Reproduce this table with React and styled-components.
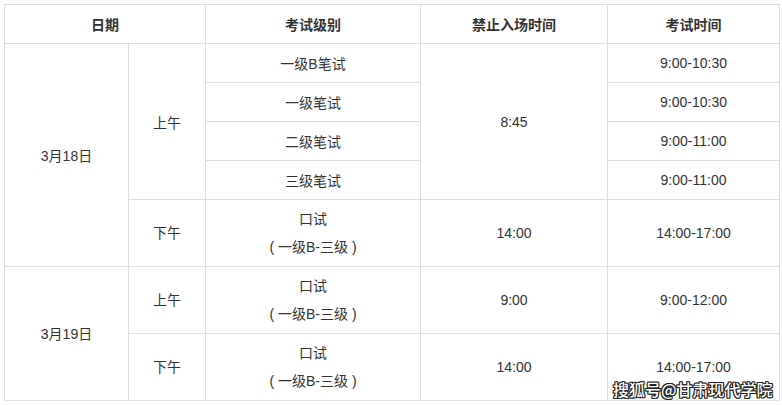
import React from "react";
import styled, { createGlobalStyle } from "styled-components";

const Global = createGlobalStyle`
  html, body { margin: 0; padding: 0; background: #fff; }
  body { font-family: "Liberation Sans", "Noto Sans CJK SC", sans-serif; }
`;

const Page = styled.div`
  position: relative;
  width: 782px;
  height: 405px;
  padding: 4px 0 0 4px;
  box-sizing: border-box;
`;

const Table = styled.table`
  border-collapse: collapse;
  table-layout: fixed;
  width: 775px;
  color: #333;
  font-size: 14px;
`;

const Th = styled.th`
  border: 1px solid #ddd;
  height: 38px;
  padding: 0;
  font-weight: bold;
  text-align: center;
  vertical-align: middle;
`;

const Td = styled.td`
  border: 1px solid #ddd;
  height: ${(p) => (p.$tall ? "66px" : "38px")};
  padding: 0;
  text-align: center;
  vertical-align: middle;
  line-height: ${(p) => (p.$tall ? "28px" : "normal")};
`;

const Line = styled.div`
  line-height: 28px;
  white-space: pre;
`;

const Watermark = styled.div`
  position: absolute;
  left: 613px;
  top: 377px;
  font-size: 16px;
  font-weight: 500;
  color: #fff;
  font-family: "Noto Sans CJK SC", sans-serif;
  text-shadow:
    1px 0 0 #222, -1px 0 0 #222, 0 1px 0 #222, 0 -1px 0 #222,
    1px 1px 0 #222, -1px -1px 0 #222, 1px -1px 0 #222, -1px 1px 0 #222;
`;

const Oral = () => (
  <>
    <Line>口试</Line>
    <Line>( 一级B-三级 )</Line>
  </>
);

export default function App() {
  return (
    <>
      <Global />
      <Page>
        <Table>
          <colgroup>
            <col style={{ width: 124 }} />
            <col style={{ width: 77 }} />
            <col style={{ width: 215 }} />
            <col style={{ width: 187 }} />
            <col style={{ width: 172 }} />
          </colgroup>
          <thead>
            <tr>
              <Th colSpan={2}>日期</Th>
              <Th>考试级别</Th>
              <Th>禁止入场时间</Th>
              <Th>考试时间</Th>
            </tr>
          </thead>
          <tbody>
            <tr>
              <Td rowSpan={5}>3月18日</Td>
              <Td rowSpan={4}>上午</Td>
              <Td>一级B笔试</Td>
              <Td rowSpan={4}>8:45</Td>
              <Td>9:00-10:30</Td>
            </tr>
            <tr>
              <Td>一级笔试</Td>
              <Td>9:00-10:30</Td>
            </tr>
            <tr>
              <Td>二级笔试</Td>
              <Td>9:00-11:00</Td>
            </tr>
            <tr>
              <Td>三级笔试</Td>
              <Td>9:00-11:00</Td>
            </tr>
            <tr>
              <Td $tall>下午</Td>
              <Td $tall><Oral /></Td>
              <Td $tall>14:00</Td>
              <Td $tall>14:00-17:00</Td>
            </tr>
            <tr>
              <Td $tall rowSpan={2}>3月19日</Td>
              <Td $tall>上午</Td>
              <Td $tall><Oral /></Td>
              <Td $tall>9:00</Td>
              <Td $tall>9:00-12:00</Td>
            </tr>
            <tr>
              <Td $tall>下午</Td>
              <Td $tall><Oral /></Td>
              <Td $tall>14:00</Td>
              <Td $tall>14:00-17:00</Td>
            </tr>
          </tbody>
        </Table>
        <Watermark>搜狐号@甘肃现代学院</Watermark>
      </Page>
    </>
  );
}
